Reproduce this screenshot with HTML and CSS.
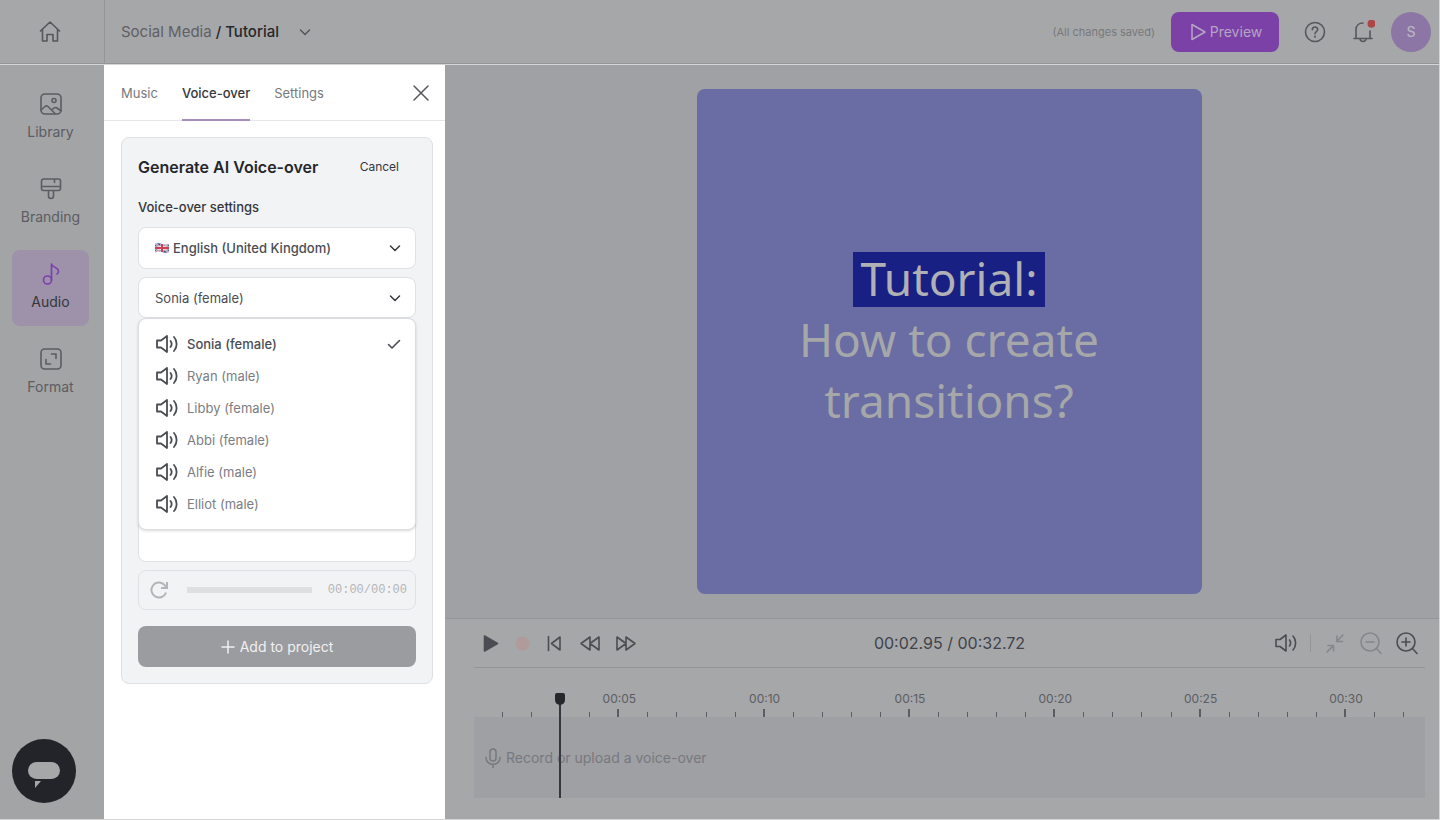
FILE: index.html
```html
<!DOCTYPE html>
<html lang="en">
<head>
	<meta charset="UTF-8">
	<meta name="viewport" content="width=device-width, initial-scale=1">
	<title>Social Media / Tutorial</title>
	<link rel="stylesheet" href="styles.css">
</head>
<body>
	<!-- shared icons -->
	<svg class="sprite" aria-hidden="true">
		<symbol id="icon-sound" viewBox="0 0 24 24"><path d="M2 8.500v7h4L12 20V4L6 8.500zM15.500 9c1.300 1.700 1.300 4.300 0 6M19 5c3.500 3.800 3.500 10.200 0 14"/></symbol>
		<symbol id="icon-down" viewBox="0 0 12 12"><path d="M1.500 4 6 8.500 10.500 4"/></symbol>
	</svg>

	<div class="app">
		<header class="header">
			<a class="home" href="#" aria-label="Home">
				<svg class="icon" viewBox="0 0 24 24"><path d="M2.500 11 12 2l9.500 9M4.500 9.500V21H9v-6.500h6V21h4.500V9.500"/></svg>
			</a>
			<button class="project" type="button"><span><span class="folder">Social Media</span> / Tutorial</span><svg class="icon-small"><use href="#icon-down"/></svg></button>
			<span class="saved">(All changes saved)</span>
			<button class="preview" type="button">
				<svg class="icon-medium" viewBox="0 0 20 20"><path d="M4 2.500v15L17 10z"/></svg>
				Preview
			</button>
			<div class="account">
				<button class="icon-btn" type="button" aria-label="Help">
					<svg class="icon" viewBox="0 0 24 24"><circle cx="12" cy="12" r="9.500"/><path d="M9.300 9.700c0-3.500 5.400-3.500 5.400-.2 0 2-2.700 2.200-2.700 4.300M12 16v1.200"/></svg>
				</button>
				<button class="icon-btn" type="button" aria-label="Notifications">
					<svg class="icon" viewBox="0 0 24 24"><path d="M3 18.500h18M5 18.500V9.500C5 5.500 8 3 12 3M19 11v7.500M9 19c.5 3.300 5.500 3.300 6 0"/><circle class="dot" cx="20.500" cy="3.700" r="4"/></svg>
				</button>
				<button class="avatar" type="button">S</button>
			</div>
		</header>

		<nav class="sidebar">
			<a class="side-item" href="#">
				<svg class="icon" viewBox="0 0 24 24"><rect x="2" y="2" width="20" height="20" rx="4"/><circle cx="15" cy="8.500" r="2"/><path d="m2 18 4-3.500c1-.8 2-.8 3 0L16 21.500M12.500 18l2.500-2c1-.7 2-.7 3 0l4 3"/></svg>
				Library
			</a>
			<a class="side-item" href="#">
				<svg class="icon" viewBox="0 0 24 24"><path d="M4.500 2h15a2 2 0 0 1 2 2v7.500a2 2 0 0 1-2 2h-15a2 2 0 0 1-2-2V4a2 2 0 0 1 2-2zM2.500 9.500h19M15.500 2v3.500M9.500 13.500v5.500a2.500 2.500 0 0 0 5 0v-5.500"/></svg>
				Branding
			</a>
			<a class="side-item active" href="#">
				<svg class="icon" viewBox="0 0 24 24"><circle cx="8.500" cy="18" r="4"/><path d="M12.500 18V2c.3 3.500 7.500 3 7 8-.1 1-.8 1.500-1.500 2"/></svg>
				Audio
			</a>
			<a class="side-item" href="#">
				<svg class="icon" viewBox="0 0 24 24"><rect x="2" y="2" width="20" height="20" rx="3.500"/><path d="M12.500 7H17v4.500M7 12.500V17h4.500"/></svg>
				Format
			</a>
			<button class="chat" type="button" aria-label="Chat">
				<svg viewBox="0 0 64 64"><rect x="16" y="23" width="32" height="17" rx="8.500"/><path d="M23 42h6l-6 7z"/></svg>
			</button>
		</nav>

		<section class="panel">
			<div class="tabs">
				<button class="tab" type="button">Music</button>
				<button class="tab current" type="button">Voice-over</button>
				<button class="tab" type="button">Settings</button>
				<button class="close icon-btn" type="button" aria-label="Close">
					<svg class="icon-medium" viewBox="0 0 20 20"><path d="m3 3 14 14M17 3 3 17"/></svg>
				</button>
			</div>
			<form class="card">
				<div class="card-head">
					<h2>Generate AI Voice-over</h2>
					<button class="cancel" type="button">Cancel</button>
				</div>
				<h3>Voice-over settings</h3>
				<div class="field language">
					<svg class="flag" viewBox="0 0 28 20"><path class="blue" d="M0 2q7-3 14 0t14 0v16q-7 3-14 0T0 18z"/><path class="white-line" d="m1 2 26 16M27 2 1 18"/><path class="thin-red" d="m1 2 26 16M27 2 1 18"/><path class="white-cross" d="M14 2v16M0 10h28"/><path class="red-cross" d="M14 2v16M0 10h28"/></svg>
					<select aria-label="Language">
						<option>English (United Kingdom)</option>
					</select>
					<svg class="icon-small arrow"><use href="#icon-down"/></svg>
				</div>
				<div class="field voice">
					<select aria-label="Voice">
						<option>Sonia (female)</option>
						<option>Ryan (male)</option>
						<option>Libby (female)</option>
						<option>Abbi (female)</option>
						<option>Alfie (male)</option>
						<option>Elliot (male)</option>
					</select>
					<svg class="icon-small arrow"><use href="#icon-down"/></svg>
					<ul class="menu">
						<li><button class="selected" type="button"><svg class="icon"><use href="#icon-sound"/></svg>Sonia (female)<svg class="check" viewBox="0 0 14 14"><path d="m1.500 7.500 3.500 3.500 7.500-7.500"/></svg></button></li>
						<li><button type="button"><svg class="icon"><use href="#icon-sound"/></svg>Ryan (male)</button></li>
						<li><button type="button"><svg class="icon"><use href="#icon-sound"/></svg>Libby (female)</button></li>
						<li><button type="button"><svg class="icon"><use href="#icon-sound"/></svg>Abbi (female)</button></li>
						<li><button type="button"><svg class="icon"><use href="#icon-sound"/></svg>Alfie (male)</button></li>
						<li><button type="button"><svg class="icon"><use href="#icon-sound"/></svg>Elliot (male)</button></li>
					</ul>
				</div>
				<textarea class="script" aria-label="Voice-over text"></textarea>
				<div class="player">
					<button class="icon-btn" type="button" aria-label="Reload">
						<svg class="icon-medium reload" viewBox="0 0 20 20"><path d="M17 12.500A7.500 7.500 0 1 1 15 4.500L17 7M18 2v6h-6"/></svg>
					</button>
					<span class="progress"></span>
					<span class="time">00:00/00:00</span>
				</div>
				<button class="add" type="button">
					<svg class="add-icon" viewBox="0 0 14 14"><path d="M7 1v12M1 7h12"/></svg>
					Add to project
				</button>
			</form>
		</section>

		<main class="editor">
			<div class="stage">
				<div class="canvas">
					<p><mark>Tutorial:</mark><br>How to create<br>transitions?</p>
				</div>
			</div>
			<div class="timeline">
				<div class="controls">
					<div class="transport">
						<button class="icon-btn" type="button" aria-label="Play"><svg class="icon solid" viewBox="0 0 24 24"><path d="M6.500 5v15l13-7.500z"/></svg></button>
						<button class="icon-btn" type="button" aria-label="Record"><svg class="icon record" viewBox="0 0 24 24"><circle cx="12.500" cy="12.500" r="7"/></svg></button>
						<button class="icon-btn" type="button" aria-label="To start"><svg class="icon" viewBox="0 0 24 24"><path d="M6.500 5.500v14M18 6v13l-8.500-6.500z"/></svg></button>
						<button class="icon-btn skip" type="button" aria-label="Rewind"><svg class="icon" viewBox="0 0 24 24"><path d="M12 6v13l-9-6.500zM21 6v13l-9-6.500z"/></svg></button>
						<button class="icon-btn skip" type="button" aria-label="Forward"><svg class="icon" viewBox="0 0 24 24"><path d="M3 6v13l9-6.500zM12 6v13l9-6.500z"/></svg></button>
					</div>
					<span class="timecode">00:02.95 / 00:32.72</span>
					<div class="zoom">
						<button class="icon-btn" type="button" aria-label="Volume"><svg class="icon"><use href="#icon-sound"/></svg></button>
						<span class="divider"></span>
						<button class="icon-btn off" type="button" aria-label="Fit"><svg class="icon" viewBox="0 0 24 24"><path d="m20 4-6.500 6.500M14 5v5.500h5.500M4 21l6.500-6.500M5 14.500h5.500V20"/></svg></button>
						<button class="icon-btn off" type="button" aria-label="Zoom out"><svg class="icon" viewBox="0 0 24 24"><circle cx="11" cy="11" r="9"/><path d="m17.500 17.500 4.500 5M7 11h8"/></svg></button>
						<button class="icon-btn" type="button" aria-label="Zoom in"><svg class="icon" viewBox="0 0 24 24"><circle cx="11" cy="11" r="9"/><path d="m17.500 17.500 4.500 5M7 11h8M11 7v8"/></svg></button>
					</div>
				</div>
				<div class="tracks">
					<div class="labels">
						<span>00:05</span>
						<span>00:10</span>
						<span>00:15</span>
						<span>00:20</span>
						<span>00:25</span>
						<span>00:30</span>
					</div>
					<!-- one tick for every second -->
					<div class="ticks">
						<i></i><i></i><i></i><i></i><i></i>
						<i></i><i></i><i></i><i></i><i></i>
						<i></i><i></i><i></i><i></i><i></i>
						<i></i><i></i><i></i><i></i><i></i>
						<i></i><i></i><i></i><i></i><i></i>
						<i></i><i></i><i></i><i></i><i></i>
						<i></i><i></i>
					</div>
					<button class="track" type="button">
						<svg class="icon-medium" viewBox="0 0 20 20"><rect x="7" y="1" width="6" height="12" rx="3"/><path d="M3 9.500c0 9 14 9 14 0M10 16.500V20"/></svg>
						Record or upload a voice-over
					</button>
					<!-- 2.95s of 32.72s -->
					<div class="playhead" style="left: 9%"></div>
				</div>
			</div>
		</main>
	</div>
</body>
</html>
```
FILE: styles.css
```css
* {
	margin: 0;
	padding: 0;
	box-sizing: border-box;
}
body {
	font-family: Inter, "Liberation Sans", sans-serif;
	font-size: 14px;
	line-height: 20px;
	color: #34373d;
	background-color: #d5d5d6;
}
button, select, textarea {
	font: inherit;
	color: inherit;
	border: 0;
	background: none;
}
button, select {
	cursor: pointer;
}
a {
	color: inherit;
	text-decoration: none;
}
ul {
	list-style: none;
}
svg {
	display: block;
	flex: none;
	fill: none;
	stroke: currentColor;
	stroke-width: 2;
	stroke-linejoin: round;
	stroke-linecap: round;
}
.sprite {
	position: absolute;
	width: 0;
	height: 0;
}
.icon {
	width: 24px;
	height: 24px;
}
.icon-medium {
	width: 20px;
	height: 20px;
}
.icon-small {
	width: 12px;
	height: 12px;
	stroke-width: 1.5;
}
.icon-btn {
	display: flex;
}
.app {
	display: grid;
	grid-template: 64px 1fr / 104px 341px 1fr;
	row-gap: 1px;
	min-height: 100vh;
	padding: 0 1px 1px 0;
}

/* header */
.header {
	grid-column: 1 / -1;
	display: flex;
	align-items: center;
	padding-right: 8px;
	background-color: #a6a7a9;
	border-bottom: 1px solid #949597;
	color: #55575b;
}
.home {
	display: flex;
	align-items: center;
	justify-content: center;
	width: 105px;
	height: 100%;
	border-right: 1px solid #949597;
	padding-right: 4px;
}
.project {
	display: flex;
	align-items: center;
	gap: 20px;
	margin-left: 16px;
	font-size: 15px;
	font-weight: 500;
	color: #25272c;
}
.project .icon-small {
	color: #55575b;
}
.folder {
	font-weight: 400;
	color: #5e6064;
}
.saved {
	margin-left: auto;
	font-size: 11px;
	color: #77797d;
}
.preview {
	display: flex;
	align-items: center;
	justify-content: center;
	gap: 2px;
	width: 108px;
	height: 40px;
	margin: 0 24px 0 16px;
	border-radius: 8px;
	background-color: #7b41a7;
	color: #b5a5c4;
}
.preview .icon-medium, .close .icon-medium {
	stroke-width: 1.5;
}
.account {
	display: flex;
	align-items: center;
	gap: 24px;
}
.account .dot {
	fill: #ad4644;
	stroke: none;
}
.avatar {
	width: 40px;
	height: 40px;
	margin-left: -8px;
	border-radius: 50%;
	background-color: #8c76a6;
	color: #b9b3c1;
	font-weight: 500;
}
.header .icon, .sidebar .icon, .controls .icon {
	stroke-width: 1.6;
}
.menu .icon {
	stroke-width: 1.8;
}

/* left navigation */
.sidebar {
	display: flex;
	flex-direction: column;
	gap: 9px;
	padding: 15px 15px 16px 12px;
	background-color: #a3a4a6;
	color: #5b5d62;
}
.side-item {
	display: flex;
	flex-direction: column;
	align-items: center;
	gap: 6px;
	padding: 12px 0 14px;
	border-radius: 8px;
}
.side-item.active {
	background-color: #9d92a9;
	color: #34373d;
}
.active .icon {
	color: #7b3fae;
}
.chat {
	width: 64px;
	height: 64px;
	margin-top: auto;
	border-radius: 50%;
	background-color: #22242a;
}
.chat svg {
	fill: #a6a7a9;
	stroke: none;
}

/* audio panel */
.panel {
	background-color: #fff;
	font-size: 13px;
}
.tabs {
	display: flex;
	gap: 24px;
	height: 56px;
	padding: 0 14px 0 17px;
	border-bottom: 1px solid #e6e6e8;
}
.tab {
	height: 56px;
	padding-top: 2px;
	border-bottom: 2px solid transparent;
	color: #77797e;
}
.tab.current {
	border-color: #a48fbd;
	color: #34373d;
	font-weight: 500;
}
.close {
	align-items: center;
	margin-left: auto;
	color: #55575b;
}
.card {
	display: flex;
	flex-direction: column;
	margin: 16px 12px 16px 17px;
	padding: 16px;
	border: 1px solid #dfe0e3;
	border-radius: 8px;
	background-color: #f2f3f5;
}
.card-head {
	display: flex;
	align-items: center;
	justify-content: space-between;
	height: 26px;
	padding-right: 17px;
}
h2 {
	font-size: 16px;
	font-weight: 600;
	color: #25272c;
}
.cancel {
	font-size: 12px;
}
h3 {
	margin: 17px 0 10px;
	font-size: 13px;
	font-weight: 500;
}
.field {
	position: relative;
	margin-bottom: 8px;
}
.field select {
	appearance: none;
	width: 100%;
	height: 42px;
	padding: 0 16px;
	border: 1px solid #e0e1e4;
	border-radius: 8px;
	background-color: #fff;
	color: #4a4d52;
}
.field.language select {
	padding-left: 34px;
	font-weight: 500;
}
.field.voice select {
	height: 41px;
}
.flag {
	position: absolute;
	left: 17px;
	top: 16px;
	width: 14px;
	height: 10px;
	stroke-linecap: butt;
}
.flag .blue { fill: #3d4f8f; stroke: none; }
.flag .white-line { stroke: #dfe0ea; stroke-width: 4; }
.flag .thin-red { stroke: #c94a5b; stroke-width: 1; }
.flag .white-cross { stroke: #fff; stroke-width: 6; }
.flag .red-cross { stroke: #cf3f50; stroke-width: 4; }
.arrow {
	position: absolute;
	right: 15px;
	top: 15px;
	pointer-events: none;
}
.menu {
	position: absolute;
	top: 41px;
	left: 0;
	right: 0;
	padding: 9px 0;
	border: 1px solid #dcdde0;
	border-radius: 8px;
	background-color: #fff;
	box-shadow: 0 1px 3px rgba(0,0,0,.15);
}
.menu button {
	display: flex;
	align-items: center;
	gap: 8px;
	width: 100%;
	height: 32px;
	padding: 0 14px 0 16px;
	color: #7b7d82;
}
.menu .icon {
	color: #4a4d52;
}
.menu .selected {
	color: #4a4d52;
	font-weight: 500;
}
.check {
	width: 14px;
	height: 14px;
	margin-left: auto;
	stroke-width: 1.6;
}
.script {
	height: 236px;
	padding: 16px;
	border: 1px solid #e0e1e4;
	border-radius: 8px;
	background-color: #fff;
	resize: none;
}
.player {
	display: flex;
	align-items: center;
	height: 40px;
	margin: 8px 0 16px;
	padding: 0 8px 0 10px;
	border: 1px solid #e0e1e4;
	border-radius: 8px;
	color: #b4b5b8;
}
.reload {
	stroke-linecap: butt;
	stroke-linejoin: miter;
}
.progress {
	flex: 1;
	height: 6px;
	margin: 0 16px 0 18px;
	background-color: #dedfe1;
}
.time {
	font-family: "Liberation Mono", monospace;
	font-size: 12px;
}
.add {
	display: flex;
	align-items: center;
	justify-content: center;
	gap: 5px;
	height: 41px;
	border-radius: 8px;
	background-color: #9b9c9f;
	color: #f0f0f1;
	font-size: 14px;
}
.add-icon {
	width: 14px;
	height: 14px;
	stroke-width: 1.5;
}

/* stage */
.editor {
	display: grid;
	grid-template-rows: 1fr auto;
	min-width: 0;
}
.stage {
	display: flex;
	justify-content: center;
	padding: 24px 14px 24px 28px;
	background-color: #a0a1a5;
}
.canvas {
	display: flex;
	align-items: center;
	justify-content: center;
	aspect-ratio: 1;
	padding-bottom: 4px;
	border-radius: 8px;
	background-color: #696da4;
	font-family: "Noto Sans", "Open Sans", sans-serif;
	font-size: 46px;
	line-height: 61px;
	text-align: center;
	color: #a6a7a9;
}
mark {
	display: inline-block;
	height: 55px;
	line-height: 53px;
	padding: 0 7px;
	background-color: #192083;
	color: #b0b1b5;
}

/* timeline */
.timeline {
	padding: 0 14px 21px 29px;
	background-color: #a6a7a9;
	border-top: 1px solid #949597;
	color: #4a4d52;
}
.controls {
	display: grid;
	grid-template-columns: 1fr auto 1fr;
	align-items: center;
	height: 49px;
	border-bottom: 1px solid #949597;
}
.transport {
	display: flex;
	gap: 8px;
	padding-left: 4px;
}
.skip {
	margin-left: 4px;
}
.solid {
	fill: currentColor;
}
.record circle {
	fill: #b19a9b;
	stroke: none;
}
.timecode {
	font-size: 16px;
	color: #404349;
}
.zoom {
	display: flex;
	align-items: center;
	justify-content: flex-end;
	gap: 12px;
	padding-right: 6px;
}
.divider {
	width: 1px;
	height: 18px;
	background-color: #949597;
}
.off {
	color: #85878b;
}
.tracks {
	position: relative;
	padding-top: 21px;
}
/* every label is centred on its five-second tick */
.labels {
	display: grid;
	grid-template-columns: 250fr repeat(6, 500fr) 22fr;
	font-size: 12px;
	text-align: center;
	color: #5b5d62;
}
.labels span:first-child {
	grid-column: 2;
}
.ticks {
	display: grid;
	grid-template-columns: repeat(32, 100fr) 72fr;
	align-items: end;
	height: 8px;
}
.ticks i {
	height: 5px;
	border-right: 1px solid #5b5d62;
}
.ticks i:nth-child(5n) {
	height: 8px;
	border-right-width: 2px;
}
.track {
	display: flex;
	align-items: center;
	gap: 3px;
	width: 100%;
	height: 81px;
	padding-left: 9px;
	background-color: #9fa0a4;
	color: #77797d;
}
.track .icon-medium {
	stroke-width: 1.5;
}
.playhead {
	position: absolute;
	top: 25px;
	bottom: 0;
	width: 2px;
	margin-left: -1px;
	background-color: #34373d;
}
.playhead::before {
	content: "";
	position: absolute;
	left: -4px;
	width: 10px;
	height: 12px;
	border-radius: 2px 2px 5px 5px;
	background-color: #25272c;
}
```
